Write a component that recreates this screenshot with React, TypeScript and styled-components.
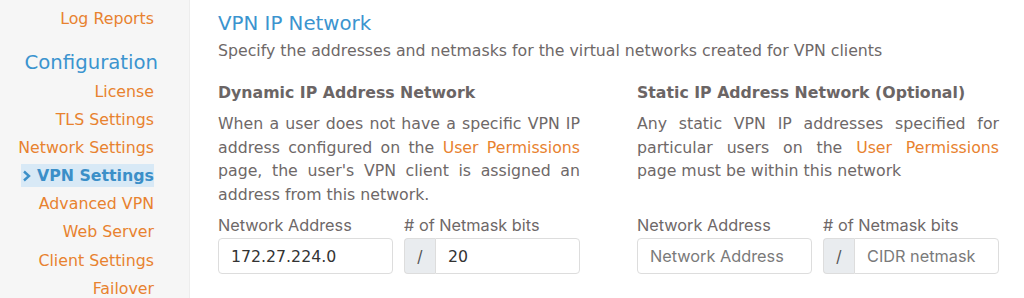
import React from "react";
import styled, { createGlobalStyle } from "styled-components";

const Global = createGlobalStyle`
  html, body { margin: 0; padding: 0; background: #ffffff; }
  body { font-family: "DejaVu Sans", Verdana, sans-serif; }
  * { box-sizing: border-box; }
`;

const Page = styled.div`
  display: flex;
  width: 1024px;
  height: 298px;
  overflow: hidden;
`;

const Sidebar = styled.nav`
  width: 190px;
  flex: none;
  background: #f6f6f6;
  border-right: 1px solid #ededed;
  display: flex;
  flex-direction: column;
  align-items: flex-end;
  padding: 4px 35px 0 0;
`;

const NavItem = styled.a<{ $active?: boolean }>`
  flex: none;
  display: flex;
  align-items: center;
  height: 28.15px;
  font-size: 15.8px;
  color: ${(p) => (p.$active ? "#3b8fc8" : "#e8822f")};
  font-weight: ${(p) => (p.$active ? 700 : 400)};
  text-decoration: none;
  white-space: nowrap;
  & > span {
    background: ${(p) => (p.$active ? "#d8e9f6" : "transparent")};
    padding: 2px 0 2px 1px;
    display: flex;
    align-items: center;
    gap: 6px;
  }
`;

const NavHeading = styled.div`
  flex: none;
  font-size: 19.7px;
  color: #3b94cf;
  height: 30px;
  margin: 15px -4px 0 0;
  display: flex;
  align-items: center;
`;

const Main = styled.main`
  flex: 1;
  padding: 10px 0 0 28px;
  color: #6e6868;
`;

const Title = styled.h1`
  margin: 0;
  font-size: 19.8px;
  font-weight: 400;
  color: #3b94cf;
  line-height: 28px;
`;

const Subtitle = styled.p`
  margin: 1px 0 0;
  font-size: 15.75px;
  line-height: 24px;
  color: #6e6868;
  white-space: nowrap;
`;

const Columns = styled.div`
  display: grid;
  grid-template-columns: 362px 362px;
  column-gap: 57px;
  margin-top: 18px;
`;

const Column = styled.section`
  display: flex;
  flex-direction: column;
`;

const SectionTitle = styled.h2`
  margin: 0;
  font-size: 15.75px;
  font-weight: 700;
  color: #6b6565;
  line-height: 24px;
  white-space: nowrap;
`;

const Para = styled.p`
  margin: 7px 0 0;
  font-size: 15.75px;
  line-height: 23.7px;
  text-align: justify;
  color: #6e6868;
  height: 101px;
`;

const Link = styled.a`
  color: #e8822f;
  text-decoration: none;
`;

const Fields = styled.div`
  display: grid;
  grid-template-columns: 175px 176px;
  column-gap: 11px;
  margin-top: 1px;
`;

const Field = styled.div`
  display: flex;
  flex-direction: column;
`;

const Label = styled.label`
  font-family: Inter, "Liberation Sans", sans-serif;
  font-size: 16.3px;
  color: #6e6868;
  line-height: 22px;
  margin-bottom: 2px;
  white-space: nowrap;
`;

const InputGroup = styled.div`
  display: flex;
  height: 36px;
`;

const Addon = styled.span`
  width: 31px;
  flex: none;
  display: flex;
  align-items: center;
  justify-content: center;
  background: #e9ecef;
  border: 1px solid #dddddd;
  border-right: none;
  border-radius: 4px 0 0 4px;
  font-family: Inter, "Liberation Sans", sans-serif;
  font-size: 16px;
  color: #555;
`;

const Input = styled.input<{ $grouped?: boolean }>`
  width: 100%;
  height: 36px;
  border: 1px solid #dddddd;
  border-radius: ${(p) => (p.$grouped ? "0 4px 4px 0" : "4px")};
  padding: 0 12px;
  font-family: "DejaVu Sans", Verdana, sans-serif;
  font-size: 15.75px;
  color: #333;
  background: #fff;
  outline: none;
  &::placeholder {
    color: #7a7a7a;
    font-family: Inter, "Liberation Sans", sans-serif;
    font-size: 16.3px;
  }
`;

const Chevron = () => (
  <svg width="9" height="12" viewBox="0 0 9 12">
    <path d="M2 1.5 L7 6 L2 10.5" fill="none" stroke="#3b8fc8" strokeWidth="2.4" />
  </svg>
);

const FieldRow = ({ addr, bits }: { addr?: string; bits?: string }) => (
  <Fields>
    <Field>
      <Label>Network Address</Label>
      <Input defaultValue={addr} placeholder="Network Address" />
    </Field>
    <Field>
      <Label># of Netmask bits</Label>
      <InputGroup>
        <Addon>/</Addon>
        <Input $grouped defaultValue={bits} placeholder="CIDR netmask" />
      </InputGroup>
    </Field>
  </Fields>
);

export default function App() {
  return (
    <Page>
      <Global />
      <Sidebar>
        <NavItem>Log Reports</NavItem>
        <NavHeading>Configuration</NavHeading>
        <NavItem>License</NavItem>
        <NavItem>TLS Settings</NavItem>
        <NavItem>Network Settings</NavItem>
        <NavItem $active>
          <span>
            <Chevron />
            VPN Settings
          </span>
        </NavItem>
        <NavItem>Advanced VPN</NavItem>
        <NavItem>Web Server</NavItem>
        <NavItem>Client Settings</NavItem>
        <NavItem>Failover</NavItem>
      </Sidebar>
      <Main>
        <Title>VPN IP Network</Title>
        <Subtitle>Specify the addresses and netmasks for the virtual networks created for VPN clients</Subtitle>
        <Columns>
          <Column>
            <SectionTitle>Dynamic IP Address Network</SectionTitle>
            <Para>
              When a user does not have a specific VPN IP address configured on the{" "}
              <Link>User Permissions</Link> page, the user's VPN client is assigned an address from this network.
            </Para>
            <FieldRow addr="172.27.224.0" bits="20" />
          </Column>
          <Column>
            <SectionTitle>Static IP Address Network (Optional)</SectionTitle>
            <Para>
              Any static VPN IP addresses specified for particular users on the <Link>User Permissions</Link>{" "}
              page must be within this network
            </Para>
            <FieldRow />
          </Column>
        </Columns>
      </Main>
    </Page>
  );
}
